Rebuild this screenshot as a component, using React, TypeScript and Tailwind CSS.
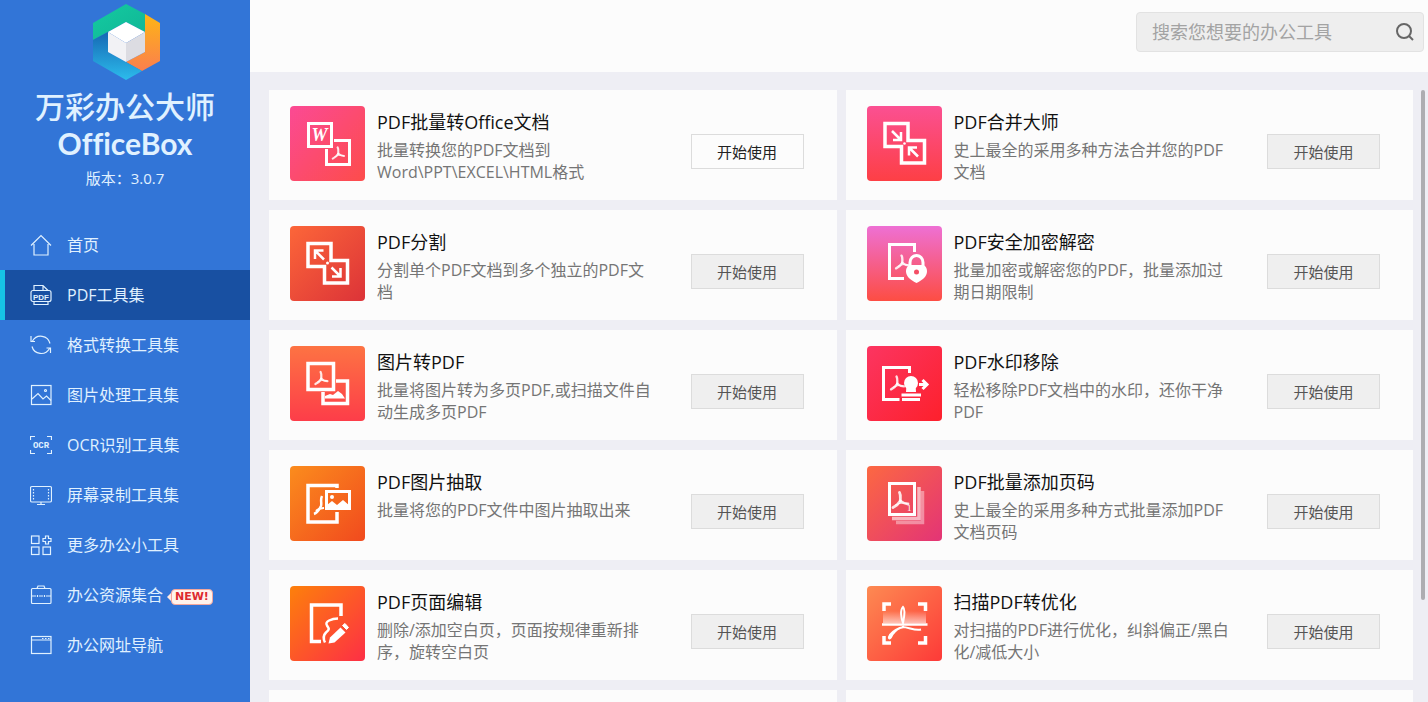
import { useState } from 'react';
import type { ReactNode } from 'react';
import clsx from 'clsx';

const LATIN = "font-['Open_Sans','Noto_Sans_CJK_SC',sans-serif]";

// The three-armed PDF mark, drawn around 0,0 and about 20 units wide
function PdfMark({ x, y, scale = 1 }: { x: number; y: number; scale?: number }) {
    return (
        <g
            transform={`translate(${x} ${y}) scale(${scale})`}
            fill="none"
            stroke="#fff"
            strokeOpacity=".85"
            strokeWidth="2.8"
            strokeLinecap="round"
            strokeLinejoin="round"
        >
            <path d="M-.5 -7.500C1 -5 .3 -2 .3 1" />
            <path d="M.3 1C-1.500 4 -4 6 -7 7.500" />
            <path d="M.3 1C3 3 5 4 8 4" />
            <path d="M-4.500 5C-1 3 3 2.500 7 3.500" strokeWidth="1.200" />
        </g>
    );
}

function Tile({ id, from, to, diagonal, children }: {
    id: string;
    from: string;
    to: string;
    diagonal?: boolean;
    children: ReactNode;
}) {
    return (
        <svg viewBox="0 0 75 75" className="size-[75px] shrink-0" aria-hidden="true">
            <defs>
                <linearGradient id={id} x1="0" y1="0" x2={diagonal ? 1 : 0} y2="1">
                    <stop offset="0" stopColor={from} />
                    <stop offset="1" stopColor={to} />
                </linearGradient>
            </defs>
            <rect width="75" height="75" rx="4" fill={`url(#${id})`} />
            <g fill="none" stroke="#fff" strokeWidth="3.500">{children}</g>
        </svg>
    );
}

const STEPS = 'M18 17.500H41V34.500H57.500V57H34.500V40.500H18Z';

const tools = [
    {
        title: 'PDF批量转Office文档',
        text: '批量转换您的PDF文档到\nWord\\PPT\\EXCEL\\HTML格式',
        icon: (
            <Tile id="office" from="#fb4a94" to="#fd4c4b" diagonal>
                <path d="M44 34.500H59.500V58.500H36.500V43" strokeWidth="3" />
                <rect x="18.500" y="17.500" width="23" height="23" strokeWidth="3" />
                <text x="21.500" y="35" fontFamily="Liberation Serif, serif" fontStyle="italic" fontWeight="bold" fontSize="18" fill="#fff" stroke="none">W</text>
                <PdfMark x={48} y={47} scale={0.75} />
            </Tile>
        ),
    },
    {
        title: 'PDF合并大师',
        text: '史上最全的采用多种方法合并您的PDF\n文档',
        icon: (
            <Tile id="merge" from="#fb5092" to="#fd3f45">
                <path d={STEPS} />
                <path d="M25 25L33.500 33.500M34 26V34H26M51 50.500L42.500 42M42 49.500V41.500H50" strokeWidth="2.500" />
                <circle cx="37.500" cy="37.500" r="1.300" fill="#fff" stroke="none" />
            </Tile>
        ),
    },
    {
        title: 'PDF分割',
        text: '分割单个PDF文档到多个独立的PDF文\n档',
        icon: (
            <Tile id="split" from="#fc6639" to="#dc3338" diagonal>
                <path d={STEPS} />
                <path d="M34 33.500L25.500 25M25 33V24.500H33.500M41.500 41.500L50 50M50.500 42V50.500H42" strokeWidth="2.500" />
                <circle cx="37.500" cy="37" r="1.500" fill="#fff" stroke="none" />
            </Tile>
        ),
    },
    {
        title: 'PDF安全加密解密',
        text: '批量加密或解密您的PDF，批量添加过\n期日期限制',
        icon: (
            <Tile id="lock" from="#ee70d4" to="#fd4d43">
                <path d="M47.500 26V18.500H22.500V52.500H37" strokeWidth="3" />
                <PdfMark x={35} y={36} scale={0.85} />
                <path d="M43 41V36.500a6 6.500 0 0 1 13 0V41" strokeWidth="3" />
                <path d="M39 45.500c0-4 2-6.500 5-6.500h11c3.500 0 5 3 5 6.500 0 5-5 9-10.500 11.500C44 54.500 39 50.500 39 45.500Z" fill="#fff" stroke="none" />
                <circle cx="49.500" cy="46" r="2.500" fill="#f44f66" stroke="none" />
            </Tile>
        ),
    },
    {
        title: '图片转PDF',
        text: '批量将图片转为多页PDF,或扫描文件自\n动生成多页PDF',
        icon: (
            <Tile id="image" from="#fd7343" to="#fd3d49">
                <rect x="18" y="17.500" width="25.500" height="26" />
                <path d="M46 35H57.500V57.500H33V46" />
                <path d="M35 52.500V50l5-2 3 1 5-4 4 3 3 4.500Z" fill="#fff" stroke="none" />
                <PdfMark x={31} y={32} scale={0.8} />
            </Tile>
        ),
    },
    {
        title: 'PDF水印移除',
        text: '轻松移除PDF文档中的水印，还你干净\nPDF',
        icon: (
            <Tile id="stamp" from="#fc3561" to="#fd202c" diagonal>
                <path d="M42.500 27V21.500H16.500V53.500H32.500" strokeWidth="3" />
                <PdfMark x={30} y={37} scale={0.85} />
                <circle cx="44" cy="37" r="7" fill="#fff" stroke="none" />
                <path d="M39.500 39H48.500L49 46H39Z" fill="#fff" stroke="none" />
                <path d="M34.500 49H54M35 53.500H53" strokeWidth="2.800" />
                <path d="M52 38.500H59" strokeWidth="3" />
                <path d="M55.500 34L60 38.500L55.500 43" strokeWidth="3" />
            </Tile>
        ),
    },
    {
        title: 'PDF图片抽取',
        text: '批量将您的PDF文件中图片抽取出来',
        icon: (
            <Tile id="extract" from="#fb8c1d" to="#f14a1e" diagonal>
                <path d="M47 22V19.500H18V56H47V46" />
                <path d="M32 30c-2 4 0 7-1 10-2 4-4 7-7 8" strokeWidth="2.500" />
                <path d="M26 45c2-2 4-3 8-3" strokeWidth="2" />
                <rect x="36.500" y="25.500" width="23" height="17" strokeWidth="3" />
                <path d="M37 42v-3l5-4 5 4 6-5 7 6v2Z" fill="#fff" stroke="none" />
                <circle cx="42" cy="31" r="2" fill="#fff" stroke="none" />
            </Tile>
        ),
    },
    {
        title: 'PDF批量添加页码',
        text: '史上最全的采用多种方式批量添加PDF\n文档页码',
        icon: (
            <Tile id="pages" from="#fc6842" to="#e33476" diagonal>
                <path d="M55.500 25V56.500H29" strokeOpacity=".4" />
                <path d="M52 21V52.500H25" strokeOpacity=".6" />
                <rect x="22.500" y="17.500" width="25" height="31" strokeWidth="3" />
                <PdfMark x={33} y={34} />
                <text x="40" y="45" fontFamily="Liberation Serif, serif" fontSize="9" fill="#fff" stroke="none">1</text>
            </Tile>
        ),
    },
    {
        title: 'PDF页面编辑',
        text: '删除/添加空白页，页面按规律重新排\n序，旋转空白页',
        icon: (
            <Tile id="edit" from="#fd800b" to="#fd2f45" diagonal>
                <path d="M51 30V19H21.500V55.500H31" />
                <path d="M48 32.500c-6 0-14 3-11 7 2 3 3 4-1 7-3 3-3 6-1 10" strokeWidth="2.500" />
                <path d="M38.500 57.500l1.500-6L50.500 41.500l5 5-11 10Z" fill="#fff" stroke="none" />
                <path d="M52.500 39.500l2.500-2 3.500 4-2 2Z" fill="#fff" stroke="#fff" strokeWidth="1" />
            </Tile>
        ),
    },
    {
        title: '扫描PDF转优化',
        text: '对扫描的PDF进行优化，纠斜偏正/黑白\n化/减低大小',
        icon: (
            <Tile id="scan" from="#fd8a52" to="#fd3a38" diagonal>
                <defs>
                    <linearGradient id="beam" x1="0" y1="0" x2="0" y2="1">
                        <stop offset="0" stopColor="#fff" stopOpacity="0" />
                        <stop offset="1" stopColor="#fff" stopOpacity=".6" />
                    </linearGradient>
                </defs>
                <rect x="16" y="25" width="43" height="12" fill="url(#beam)" stroke="none" />
                <path d="M17 25V18H24M51 18H58.500V25M17 50V57H24M51 57H58.500V50" />
                <path d="M15 38.500H60.500" strokeWidth="2.500" />
                <path d="M36 37c-2-5-3-13 0-16 3 3 1 11 0 16Z" strokeWidth="2" />
                <path d="M35 41c7 0 12 4 19 2.500M33 42c-5 2-7 5-9 9-2 2.500-3 1-1-2 3-4 8-7 14-8" strokeWidth="2.200" />
            </Tile>
        ),
    },
];

const navItems = [
    {
        label: '首页',
        icon: <path d="M1 11.500L11 1.500L21 11.500M4 10V21H18V10" />,
    },
    {
        label: 'PDF工具集',
        icon: (
            <>
                <path d="M4 6.500V1.500H13L18 6.500M13 1.500V6.500M4 17.500V20.500H18V17.500" />
                <rect x="1" y="6.500" width="20" height="11" rx="2" />
                <text x="11" y="15.500" textAnchor="middle" fontFamily="Liberation Sans, sans-serif" fontWeight="bold" fontSize="8" fill="currentColor" stroke="none">PDF</text>
            </>
        ),
    },
    {
        label: '格式转换工具集',
        icon: <path d="M1 2V7.500H5M2.500 7A9.500 9.500 0 0 1 20 9.500M20.500 19V14H16.500M19.500 14.500A9.500 9.500 0 0 1 2 12.500" />,
    },
    {
        label: '图片处理工具集',
        icon: (
            <>
                <rect x="1.500" y="1.500" width="19.500" height="19" />
                <path d="M2 15L8 9.500L13 15L16.500 12L21 16.500" />
                <circle cx="15.500" cy="6.500" r="1" />
            </>
        ),
    },
    {
        label: 'OCR识别工具集',
        icon: (
            <>
                <path d="M.5 6V2.500H5M17 2.500H21.500V6M.5 16V19.500H5M17 19.500H21.500V16" />
                <text x="11" y="14" textAnchor="middle" fontFamily="Liberation Mono, monospace" fontWeight="bold" fontSize="9" fill="currentColor" stroke="none">OCR</text>
            </>
        ),
    },
    {
        label: '屏幕录制工具集',
        icon: (
            <>
                <rect x=".5" y="2.500" width="21" height="15.500" rx="1.500" />
                <path d="M3.500 5V16M18.500 5V16" strokeDasharray="1.500 1.500" />
                <path d="M11 18V20.500M7 20.500H15" />
            </>
        ),
    },
    {
        label: '更多办公小工具',
        icon: (
            <>
                <rect x="1.500" y="2" width="7.500" height="7.500" />
                <rect x="1.500" y="13" width="7.500" height="7.500" />
                <rect x="13" y="13" width="7.500" height="7.500" />
                <path d="M15.500 2H18.500V4.500H21V7.500H18.500V10H15.500V7.500H13V4.500H15.500Z" />
            </>
        ),
    },
    {
        label: '办公资源集合',
        isNew: true,
        icon: (
            <>
                <rect x="1.500" y="4.500" width="19.500" height="15" rx="1" />
                <path d="M7 4.500L8 2H14L15 4.500M1.500 12H6M9 12H13M16 12H21M7.500 11V13M14.500 11V13" />
            </>
        ),
    },
    {
        label: '办公网址导航',
        icon: (
            <>
                <rect x="1.500" y="2.500" width="19.500" height="17" />
                <path d="M1.500 6H21M12 4.500H13.500M15 4.500H16.500M18 4.500H19.500" />
            </>
        ),
    },
];

function Logo() {
    return (
        <svg viewBox="0 0 67 76" className="ml-0.5 h-19 w-[67px]" aria-hidden="true">
            <defs>
                <linearGradient id="lg-green" x1="0" y1="0" x2="1" y2="1">
                    <stop offset="0" stopColor="#14cba0" />
                    <stop offset="1" stopColor="#10b596" />
                </linearGradient>
                <linearGradient id="lg-orange" x1="0" y1="0" x2="0" y2="1">
                    <stop offset="0" stopColor="#fdb515" />
                    <stop offset="1" stopColor="#fb7f4e" />
                </linearGradient>
                <linearGradient id="lg-blue" x1="0" y1="0" x2="0" y2="1">
                    <stop offset="0" stopColor="#1668b4" />
                    <stop offset="1" stopColor="#2cbcec" />
                </linearGradient>
            </defs>
            <path d="M0 19L33 0L52 10V28L33 18L0 36Z" fill="url(#lg-green)" />
            <path d="M52 10L67 19V57L49 67L33 58L52 48Z" fill="url(#lg-orange)" />
            <path d="M0 36L15 28V48L49 67L33 76L0 57Z" fill="url(#lg-blue)" />
            <path d="M15 28L33 18L52 28L33 39Z" fill="#fff" />
            <path d="M15 28L33 39V58L15 48Z" fill="#f2f2f5" />
            <path d="M52 28L33 39V58L52 48Z" fill="#dcdce2" />
        </svg>
    );
}

function NewBadge() {
    return (
        <span className="ml-1 flex items-center pt-1">
            <span className="size-0 border-y-4 border-r-4 border-y-transparent border-r-[#ffe9e2]" />
            <span className="rounded-sm border border-[#f3a79d] bg-[#fff3ec] px-[3px] font-['DejaVu_Sans',sans-serif] text-[11px] leading-[14px] font-bold text-[#dd2a2f]">
                NEW!
            </span>
        </span>
    );
}

export default function App() {
    const [active, setActive] = useState('PDF工具集');
    const [query, setQuery] = useState('');

    return (
        <div className={clsx('flex h-screen overflow-hidden bg-[#eeeef4]', LATIN)}>
            <aside className="flex w-[250px] shrink-0 flex-col bg-[#3275d7] text-[#e0f1ff]">
                <div className="flex h-[220px] flex-col items-center pt-1">
                    <Logo />
                    <h1 className="mt-[7px] flex flex-col items-center text-[30px]">
                        <span className="leading-10 font-medium">万彩办公大师</span>
                        <span className="font-['Lato',sans-serif] leading-8 font-bold [font-variant-ligatures:none]">OfficeBox</span>
                    </h1>
                    <p className="mt-[7px] text-[15px] leading-6">版本：3.0.7</p>
                </div>

                <nav className="flex flex-col">
                    {navItems.map((item) => (
                        <button
                            key={item.label}
                            type="button"
                            onClick={() => setActive(item.label)}
                            className={clsx(
                                'flex h-[50px] items-center border-l-5 pl-[25px] text-base',
                                active === item.label ? 'border-[#16c3e6] bg-[#1850a2]' : 'border-transparent',
                            )}
                        >
                            <svg
                                viewBox="0 0 22 22"
                                className="mr-[15px] size-[22px] shrink-0"
                                fill="none"
                                stroke="currentColor"
                                strokeWidth="1.200"
                                aria-hidden="true"
                            >
                                {item.icon}
                            </svg>
                            {item.label}
                            {item.isNew && <NewBadge />}
                        </button>
                    ))}
                </nav>
            </aside>

            <div className="flex min-w-0 flex-1 flex-col">
                <header className="flex h-[72px] shrink-0 items-start justify-end bg-[#fcfcfc] pt-3 pr-1">
                    <label className="flex h-10 w-72 items-center rounded-sm border border-[#e2e2e2] bg-[#eeeeee] pr-2 pl-[15px]">
                        <input
                            type="text"
                            value={query}
                            onChange={(e) => setQuery(e.target.value)}
                            placeholder="搜索您想要的办公工具"
                            aria-label="搜索"
                            className="min-w-0 flex-1 bg-transparent text-lg text-[#555] outline-none placeholder:text-[#a3a3a3]"
                        />
                        <svg viewBox="0 0 20 20" className="size-5" fill="none" stroke="#666" strokeWidth="2" aria-hidden="true">
                            <circle cx="9" cy="9" r="7" />
                            <path d="M14 14L18 18" />
                        </svg>
                    </label>
                </header>

                <div className="flex min-h-0 flex-1 overflow-hidden pt-[18px] pl-[19px]">
                    <main className="grid min-w-0 flex-1 auto-rows-[110px] grid-cols-2 gap-x-[9px] gap-y-2.5">
                        {tools.map((tool, i) => (
                            <article key={tool.title} className="flex items-start bg-[#fcfcfc] pt-4 pr-[33px] pl-[21px]">
                                {tool.icon}
                                <div className="min-w-0 flex-1 pt-0.5 pl-3">
                                    <h2 className="text-lg leading-7 text-[#111]">{tool.title}</h2>
                                    <p className="mt-[3px] text-base leading-[22px] whitespace-pre-line text-[#757575]">{tool.text}</p>
                                </div>
                                <button
                                    type="button"
                                    className={clsx(
                                        'mt-7 h-[35px] w-[113px] shrink-0 border border-[#dcdcdc] pt-0.5 text-[15px]',
                                        i === 0 ? 'bg-[#fcfcfc] text-[#222]' : 'bg-[#efefef] text-[#555]',
                                    )}
                                >
                                    开始使用
                                </button>
                            </article>
                        ))}
                        <div className="bg-[#fcfcfc]" />
                        <div className="bg-[#fcfcfc]" />
                    </main>
                    {/* Scroll rail */}
                    <div className="flex w-[15px] shrink-0 justify-end pr-[3px]">
                        <div className="h-5/6 w-1 rounded-sm bg-[#adadb1]" />
                    </div>
                </div>
            </div>
        </div>
    );
}
